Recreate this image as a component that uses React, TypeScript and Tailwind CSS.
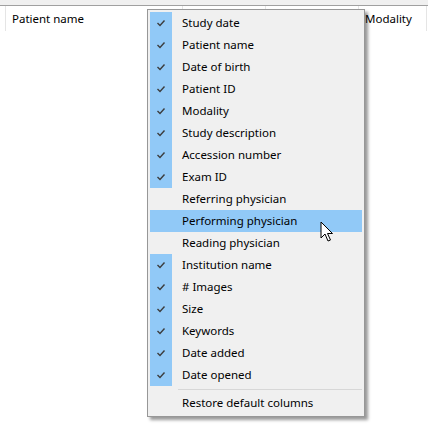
const columns = [
  { label: 'Study date', checked: true },
  { label: 'Patient name', checked: true },
  { label: 'Date of birth', checked: true },
  { label: 'Patient ID', checked: true },
  { label: 'Modality', checked: true },
  { label: 'Study description', checked: true },
  { label: 'Accession number', checked: true },
  { label: 'Exam ID', checked: true },
  { label: 'Referring physician', checked: false },
  { label: 'Performing physician', checked: false, hover: true },
  { label: 'Reading physician', checked: false },
  { label: 'Institution name', checked: true },
  { label: '# Images', checked: true },
  { label: 'Size', checked: true },
  { label: 'Keywords', checked: true },
  { label: 'Date added', checked: true },
  { label: 'Date opened', checked: true },
]

function Check() {
  return (
    <svg width="10" height="10" viewBox="0 0 10 10" fill="none">
      <path d="M1.5 5 L4 7.5 L8.5 2.5" stroke="#3c3c3c" strokeWidth="1.4" />
    </svg>
  )
}

function Cursor() {
  return (
    <svg width="13" height="21" viewBox="0 0 13 21" className="absolute left-[320px] top-[221px]">
      <path
        d="M1 1 L1 17 L5 13 L8 20 L10.5 19 L7.5 12.5 L12.5 12.5 Z"
        fill="#fff"
        stroke="#000"
        strokeWidth="1"
        strokeLinejoin="miter"
      />
    </svg>
  )
}

export default function App() {
  return (
    <div className="relative h-[432px] w-[428px] overflow-hidden bg-white font-['Noto_Sans','Open_Sans',sans-serif] text-[11.5px] text-black">
      <div className="h-[5px] bg-[#f0f0f0]" />
      <div className="h-px bg-[#a0a0a0]" />
      <div className="flex h-[25px] pl-[5px]">
        <div className="flex w-[177px] items-center border-l border-[#e5e5e5] pl-[6px]">Patient name</div>
        <div className="w-[83px] border-l border-[#e5e5e5]" />
        <div className="w-[93px] border-l border-[#e5e5e5]" />
        <div className="flex w-[68px] items-center border-l border-[#e5e5e5] pl-[6px]">Modality</div>
        <div className="border-l border-[#e5e5e5]" />
      </div>

      <div className="absolute left-[147px] top-[9px] w-[218px] border border-[#979797] bg-[#f0f0f0] p-[2px] shadow-[3px_3px_3px_rgba(0,0,0,0.4)]">
        {columns.map((c) => (
          <div
            key={c.label}
            className={`flex h-[22px] items-center ${c.hover ? 'bg-[#91c9f7]' : ''}`}
          >
            <div
              className={`flex h-[22px] w-[22px] items-center justify-center ${c.checked ? 'bg-[#91c9f7]' : ''}`}
            >
              {c.checked && <Check />}
            </div>
            <span className="pl-[10px]">{c.label}</span>
          </div>
        ))}
        <div className="mb-[2px] ml-[28px] mt-[3px] h-px bg-[#d7d7d7]" />
        <div className="flex h-[22px] items-center pl-[32px]">Restore default columns</div>
      </div>

      <Cursor />
    </div>
  )
}
